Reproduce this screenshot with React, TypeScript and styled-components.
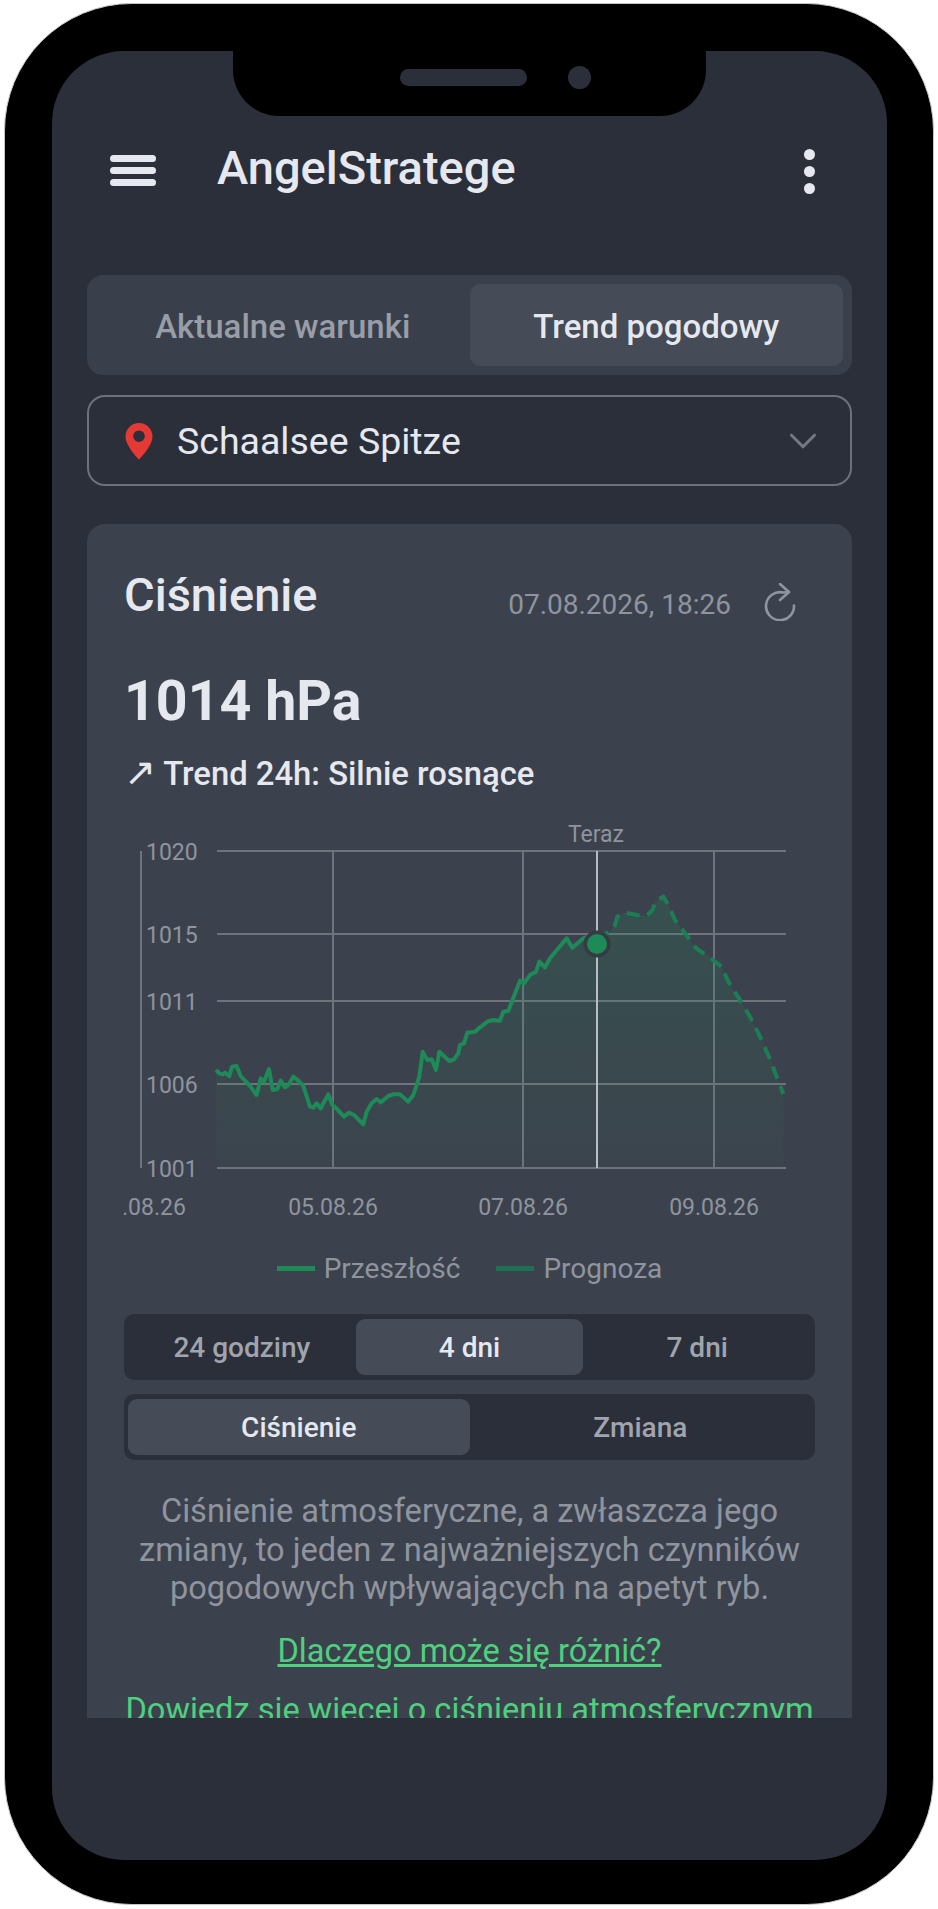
import React from 'react';
import styled, { createGlobalStyle } from 'styled-components';
import { ChevronDown } from 'lucide-react';

const colors = {
  screen: '#2b2f3a',
  card: '#3c424d',
  tabs: '#3a404b',
  active: '#454b57',
  text: '#e6e8ef',
  muted: '#8f949e',
  green: '#1d8a57',
  link: '#4ed07e',
};

const GlobalStyle = createGlobalStyle`
  html, body {
    margin: 0;
    padding: 0;
    background: #fff;
    font-family: Roboto, "Noto Sans", sans-serif;
  }
  * {
    box-sizing: border-box;
  }
`;

// chart is placed in page pixels, svg starts at (124, 820)
const CHART_X = 124;
const CHART_Y = 820;
const px = (x: number) => x - CHART_X;
const py = (y: number) => y - CHART_Y;

const pastLeft = [
  [48, 660], [58, 670], [68, 673], [75, 668], [88, 678], [96, 650], [110, 648], [122, 678],
  [138, 695], [152, 710], [170, 735], [182, 685], [192, 695], [207, 657], [218, 720], [232, 717],
  [242, 692], [255, 712], [265, 705], [280, 680], [295, 692], [310, 708], [330, 770], [340, 773],
  [350, 760], [362, 775], [385, 733], [397, 765], [412, 778], [432, 800], [447, 788], [462, 795],
  [490, 823], [500, 785], [515, 760], [530, 747], [542, 757], [565, 738], [580, 733], [600, 733],
  [625, 755], [640, 735], [658, 680], [668, 605], [682, 630], [695, 628], [708, 660], [718, 605],
  [748, 633], [762, 628], [775, 610], [780, 585], [792, 580], [802, 548], [825, 545], [840, 532],
  [865, 513], [880, 510], [900, 512],
].map(([x, y]) => [200 + x / 3, 850 + y / 3]);

const pastRight = [
  [10, 485], [25, 482], [60, 392], [72, 400], [90, 375], [108, 365], [118, 335], [135, 352],
  [150, 325], [200, 265], [217, 293], [250, 265], [290, 250],
].map(([x, y]) => [500 + x / 3, 850 + y / 3]);

const forecast = [
  [290, 262], [330, 245], [345, 225], [352, 200], [375, 188], [410, 195], [440, 197], [458, 180],
  [465, 155], [490, 140], [505, 165], [525, 210], [548, 240], [580, 285], [595, 300], [620, 315],
  [645, 335], [665, 350], [685, 395], [720, 450], [750, 500], [785, 570], [815, 640], [850, 732],
].map(([x, y]) => [500 + x / 3, 850 + y / 3]);

const toPoints = (pts: number[][]) => pts.map(([x, y]) => `${px(x)},${py(y)}`).join(' ');

const past = [...pastLeft, ...pastRight];
const area = [...past, ...forecast];
const areaPoints = toPoints([[217, 1168], ...area, [783, 1168]]);

const yTicks = [
  { label: '1020', line: 851, base: 860 },
  { label: '1015', line: 934, base: 943 },
  { label: '1011', line: 1001, base: 1010 },
  { label: '1006', line: 1084, base: 1093 },
  { label: '1001', line: 1168, base: 1177 },
];

const xTicks = [
  { label: '03.08.26', x: 141 },
  { label: '05.08.26', x: 333 },
  { label: '07.08.26', x: 523 },
  { label: '09.08.26', x: 714 },
];

function PressureChart() {
  return (
    <ChartSvg viewBox="0 0 690 410" width="690" height="410">
      <defs>
        <linearGradient id="pressureFill" x1="0" y1="40" x2="0" y2="348" gradientUnits="userSpaceOnUse">
          <stop offset="0" stopColor="#1d8a57" stopOpacity="0.22" />
          <stop offset="1" stopColor="#1d8a57" stopOpacity="0.03" />
        </linearGradient>
      </defs>
      {xTicks.map((t) => (
        <GridLine key={t.label} x1={px(t.x)} x2={px(t.x)} y1={py(851)} y2={py(1168)} />
      ))}
      {yTicks.map((t) => (
        <GridLine key={t.label} x1={px(217)} x2={px(786)} y1={py(t.line)} y2={py(t.line)} />
      ))}
      <polygon points={areaPoints} fill="url(#pressureFill)" />
      <NowLine x1={px(597)} x2={px(597)} y1={py(851)} y2={py(1168)} />
      <polyline points={toPoints(past)} fill="none" stroke={colors.green} strokeWidth="4" strokeLinejoin="round" />
      <polyline
        points={toPoints(forecast)}
        fill="none"
        stroke="#1c7f54"
        strokeWidth="4"
        strokeDasharray="13 8"
      />
      <circle cx={px(597)} cy={py(944)} r="13.5" fill="#353a45" />
      <circle cx={px(597)} cy={py(944)} r="10" fill={colors.green} />
      {yTicks.map((t) => (
        <AxisText key={t.label} x={px(146)} y={py(t.base)}>
          {t.label}
        </AxisText>
      ))}
      {xTicks.map((t) => (
        <AxisText key={t.label} x={px(t.x)} y={py(1215)} textAnchor="middle">
          {t.label}
        </AxisText>
      ))}
      <AxisText x={px(596)} y={py(842)} textAnchor="middle">
        Teraz
      </AxisText>
    </ChartSvg>
  );
}

export default function App() {
  return (
    <>
      <GlobalStyle />
      <Phone>
        <Screen>
          <Notch>
            <Speaker />
            <Camera />
          </Notch>
          <Content>
            <Header>
              <MenuButton>
                <span />
                <span />
                <span />
              </MenuButton>
              <AppTitle>AngelStratege</AppTitle>
              <MoreButton>
                <span />
                <span />
                <span />
              </MoreButton>
            </Header>

            <Tabs>
              <Tab>Aktualne warunki</Tab>
              <Tab $active>Trend pogodowy</Tab>
            </Tabs>

            <LocationSelect>
              <svg width="36" height="38" viewBox="0 0 36 38">
                <path
                  fillRule="evenodd"
                  fill="#e53935"
                  d="M18 1C10.5 1 4.5 7 4.5 14.4 4.5 24 18 37.5 18 37.5S31.5 24 31.5 14.4C31.5 7 25.5 1 18 1Zm0 19a5.8 5.8 0 1 1 0-11.6A5.8 5.8 0 0 1 18 20Z"
                />
              </svg>
              <LocationName>Schaalsee Spitze</LocationName>
              <ChevronDown size={46} color="#737882" strokeWidth={1.6} />
            </LocationSelect>

            <Card>
              <CardHead>
                <CardTitle>Ciśnienie</CardTitle>
                <Timestamp>07.08.2026, 18:26</Timestamp>
                <RefreshIcon width="34" height="38" viewBox="0 0 34 38" fill="none" stroke="#8f949e" strokeWidth="2.6" strokeLinecap="round" strokeLinejoin="round">
                  <path d="M31 22.5A14 14 0 1 1 20 9.5L26 9" />
                  <path d="M17 1l9 8-9 8" />
                </RefreshIcon>
              </CardHead>
              <Value>1014 hPa</Value>
              <Trend>
                <TrendArrow>↗</TrendArrow> Trend 24h: Silnie rosnące
              </Trend>
              <PressureChart />
              <Legend>
                <LegendItem>
                  <LegendLine $color={colors.green} />
                  Przeszłość
                </LegendItem>
                <LegendItem>
                  <LegendLine $color="#1f6f52" />
                  Prognoza
                </LegendItem>
              </Legend>
              <Segments>
                <Segment>24 godziny</Segment>
                <Segment $active>4 dni</Segment>
                <Segment>7 dni</Segment>
              </Segments>
              <Segments>
                <Segment $active>Ciśnienie</Segment>
                <Segment>Zmiana</Segment>
              </Segments>
              <Description>
                Ciśnienie atmosferyczne, a zwłaszcza jego zmiany, to jeden z najważniejszych czynników pogodowych wpływających na apetyt ryb.
              </Description>
              <LinkText $underline>Dlaczego może się różnić?</LinkText>
              <LinkText>Dowiedz się więcej o ciśnieniu atmosferycznym</LinkText>
            </Card>
          </Content>
        </Screen>
      </Phone>
    </>
  );
}

const Phone = styled.div`
  width: 930px;
  height: 1902px;
  margin: 3px 4px;
  padding: 47px 46px 44px 47px;
  background: #000;
  border: 1px solid #c4c4c4;
  border-radius: 128px;
`;

const Screen = styled.div`
  position: relative;
  height: 100%;
  background: ${colors.screen};
  border-radius: 72px;
  overflow: hidden;
`;

const Notch = styled.div`
  position: absolute;
  top: 0;
  left: 181px;
  width: 473px;
  height: 65px;
  background: #000;
  border-radius: 0 0 46px 46px;
  display: flex;
  align-items: center;
  padding: 0 0 12px 167px;
  gap: 41px;
`;

const Speaker = styled.div`
  width: 127px;
  height: 17px;
  border-radius: 9px;
  background: ${colors.screen};
`;

const Camera = styled.div`
  width: 23px;
  height: 23px;
  border-radius: 50%;
  background: ${colors.screen};
`;

const Content = styled.div`
  height: 1667px;
  overflow: hidden;
  padding: 0 35px;
`;

const Header = styled.header`
  height: 224px;
  padding: 100px 37px 0 23px;
  display: flex;
  align-items: flex-start;
`;

const MenuButton = styled.div`
  width: 46px;
  margin-top: 4px;
  display: flex;
  flex-direction: column;
  gap: 5px;

  span {
    display: block;
    height: 7px;
    border-radius: 4px;
    background: ${colors.text};
  }
`;

const AppTitle = styled.h1`
  flex: 1;
  margin: -5px 0 0 61px;
  font-size: 47px;
  line-height: 44px;
  font-weight: 500;
  color: ${colors.text};
`;

const MoreButton = styled.div`
  display: flex;
  flex-direction: column;
  gap: 6px;
  margin-top: -2px;

  span {
    display: block;
    width: 11px;
    height: 11px;
    border-radius: 50%;
    background: ${colors.text};
  }
`;

const Tabs = styled.div`
  height: 100px;
  padding: 9px;
  display: flex;
  background: ${colors.tabs};
  border-radius: 16px;
`;

const Tab = styled.div<{ $active?: boolean }>`
  flex: 1;
  display: flex;
  align-items: center;
  justify-content: center;
  padding-top: 2px;
  font-size: 33px;
  font-weight: 500;
  color: ${(p) => (p.$active ? colors.text : '#989da7')};
  background: ${(p) => (p.$active ? colors.active : 'transparent')};
  border-radius: 10px;
`;

const LocationSelect = styled.div`
  height: 91px;
  margin-top: 20px;
  padding: 0 24px 0 32px;
  display: flex;
  align-items: center;
  border: 2px solid #6c717b;
  border-radius: 18px;
`;

const LocationName = styled.span`
  flex: 1;
  margin-left: 20px;
  font-size: 37.5px;
  color: ${colors.text};
`;

const Card = styled.section`
  margin-top: 38px;
  padding: 43px 37px 60px;
  background: ${colors.card};
  border-radius: 18px 18px 0 0;
`;

const CardHead = styled.div`
  display: flex;
  align-items: center;
  height: 54px;
  padding-right: 18px;
`;

const CardTitle = styled.h2`
  flex: 1;
  margin: 0;
  font-size: 47px;
  font-weight: 500;
  color: ${colors.text};
`;

const Timestamp = styled.span`
  margin: 20px 32px 0 0;
  font-size: 28px;
  color: ${colors.muted};
`;

const RefreshIcon = styled.svg`
  margin-top: 16px;
`;

const Value = styled.div`
  margin-top: 49px;
  font-size: 55.5px;
  line-height: 64px;
  font-weight: 700;
  color: ${colors.text};
`;

const Trend = styled.div`
  margin-top: 20px;
  font-size: 32.8px;
  line-height: 40px;
  font-weight: 500;
  color: ${colors.text};
`;

const TrendArrow = styled.span`
  font-family: "DejaVu Sans", sans-serif;
  font-size: 38px;
  line-height: 0;
  font-weight: 400;
`;

const ChartSvg = styled.svg`
  display: block;
  margin-top: 26px;
`;

const GridLine = styled.line`
  stroke: #6e737c;
  stroke-width: 2;
`;

const NowLine = styled.line`
  stroke: #b9bcc2;
  stroke-width: 2;
`;

const AxisText = styled.text`
  font-family: Roboto, sans-serif;
  font-size: 23px;
  fill: #8f949e;
`;

const Legend = styled.div`
  display: flex;
  justify-content: center;
  gap: 36px;
  margin: 18px 0 26px;
  height: 40px;
`;

const LegendItem = styled.div`
  display: flex;
  align-items: center;
  gap: 9px;
  font-size: 28px;
  color: ${colors.muted};
`;

const LegendLine = styled.span<{ $color: string }>`
  width: 38px;
  height: 5px;
  background: ${(p) => p.$color};
`;

const Segments = styled.div`
  height: 66px;
  padding: 5px 4px;
  margin-bottom: 14px;
  display: flex;
  background: ${colors.screen};
  border-radius: 10px;
`;

const Segment = styled.div<{ $active?: boolean }>`
  flex: 1;
  display: flex;
  align-items: center;
  justify-content: center;
  font-size: 28px;
  font-weight: 500;
  color: ${(p) => (p.$active ? colors.text : '#a0a4ad')};
  background: ${(p) => (p.$active ? colors.active : 'transparent')};
  border-radius: 9px;
`;

const Description = styled.p`
  margin: 32px 0 0;
  text-align: center;
  font-size: 32.6px;
  line-height: 38.5px;
  color: ${colors.muted};
`;

const LinkText = styled.div<{ $underline?: boolean }>`
  margin-top: 23px;
  text-align: center;
  white-space: nowrap;
  font-size: 32.6px;
  line-height: 40px;
  color: ${colors.link};
  text-decoration: ${(p) => (p.$underline ? 'underline' : 'none')};

  & + & {
    margin-top: 19px;
  }
`;
